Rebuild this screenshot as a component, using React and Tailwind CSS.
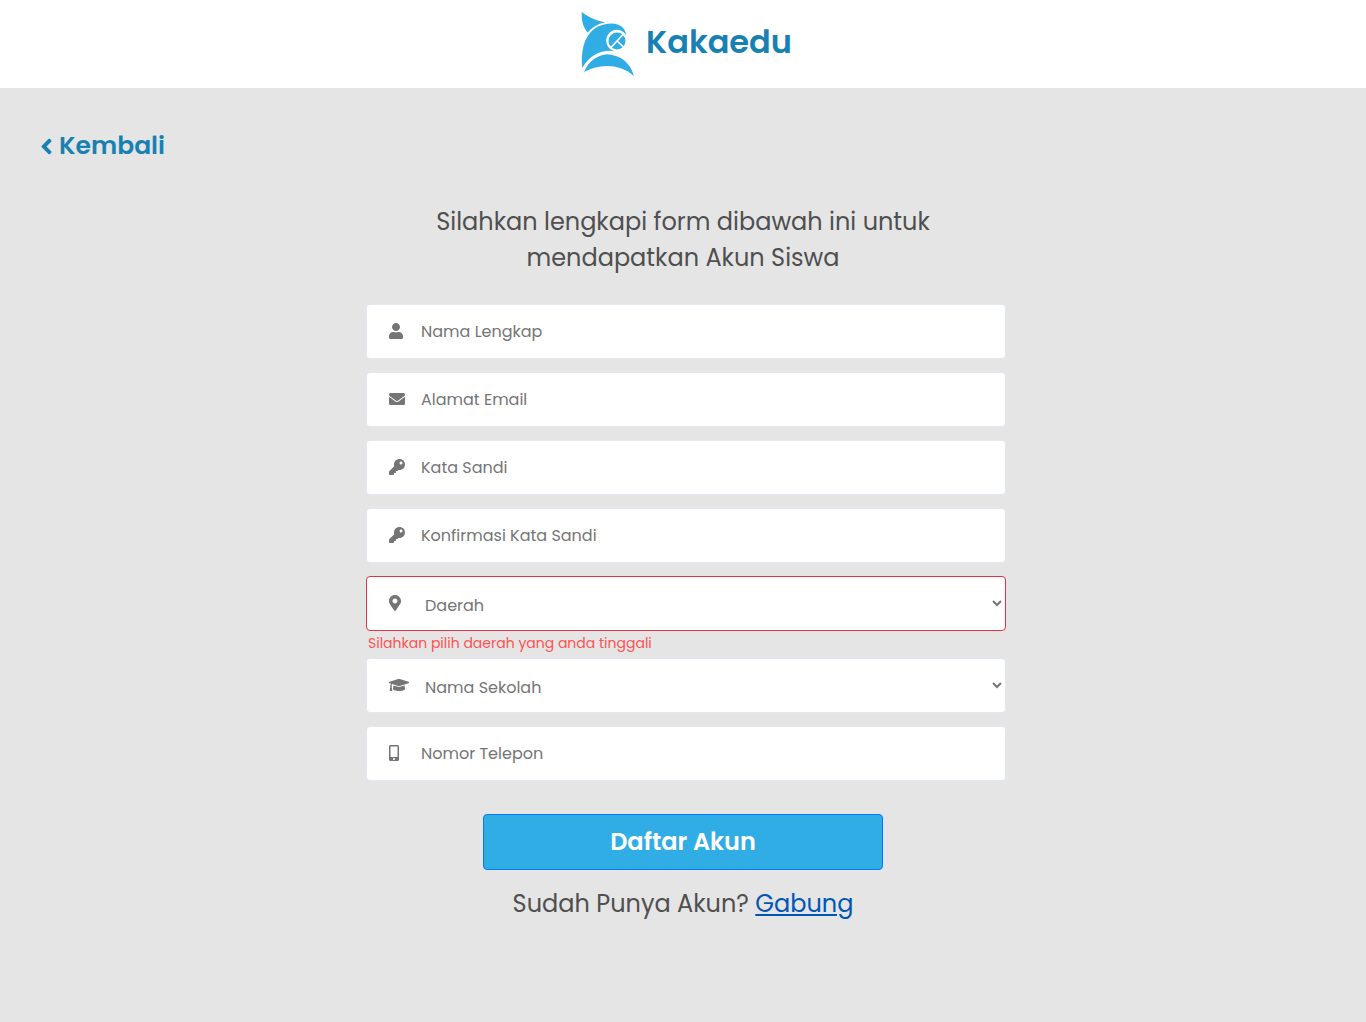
import {
  FaAngleLeft,
  FaEnvelope,
  FaGraduationCap,
  FaKey,
  FaMapMarkerAlt,
  FaMobileAlt,
  FaUser,
} from "react-icons/fa";

function Logo() {
  return (
    <svg className="h-16 w-[54px]" viewBox="0 0 54 64" aria-hidden="true">
      <g fill="#31ade5">
        <path d="M.8 0C8 5.500 15 8.500 24 10.300C17 12 11 15.500 6.500 20.500C2 15 .2 8 .8 0Z" />
        <path d="M1.200 56C-.8 35 5 12 31 11.500C39 11.800 44.500 16 45.300 23.500A10.700 10.700 0 1 0 35 39.200C22 37 9 42 1.200 56Z" />
        <path d="M3 60C8 48 17 43.200 26 42.200C40 43 49.500 51 53 64C40 52 19 51 3 60Z" />
        <circle cx="36" cy="29" r="8.500" />
      </g>
      <path
        d="M42.500 22L29.500 36M36 29L42.500 35"
        fill="none"
        stroke="#fff"
        strokeWidth="1.600"
      />
    </svg>
  );
}

const fieldBase =
  "h-[55px] w-full rounded border bg-white text-base text-[#757575] placeholder:text-[#757575]";

function FieldIcon({ htmlFor, icon: Glyph, width }) {
  return (
    <label htmlFor={htmlFor} className="absolute top-[19px] left-[23px] text-[#757575]">
      <Glyph className={`h-4 ${width}`} aria-hidden="true" />
    </label>
  );
}

function TextField({ id, label, type = "text", icon, iconWidth }) {
  return (
    <div className="relative mb-[13px]">
      <input
        id={id}
        type={type}
        placeholder={label}
        aria-label={label}
        className={`${fieldBase} border-[#e2e8f0] pr-3 pl-[54px]`}
      />
      <FieldIcon htmlFor={id} icon={icon} width={iconWidth} />
    </div>
  );
}

function SelectField({ id, label, icon, iconWidth, error }) {
  return (
    <div className={error ? "mb-1" : "mb-[13px]"}>
      <div className="relative">
        <select
          id={id}
          aria-label={label}
          aria-invalid={Boolean(error)}
          aria-describedby={error ? `${id}-error` : undefined}
          className={`${fieldBase} block pt-1 pr-px pl-[54px] ${error ? "border-[#dc3545]" : "border-[#e2e8f0]"}`}
        >
          <option>{label}</option>
        </select>
        <FieldIcon htmlFor={id} icon={icon} width={iconWidth} />
      </div>
      {error && (
        <p id={`${id}-error`} className="pt-0.5 pl-0.5 text-sm leading-[21px] text-[#ff5252]">{error}</p>
      )}
    </div>
  );
}

export default function App() {
  return (
    <div className="min-h-screen bg-[#e5e5e5] font-['Poppins','Inter',sans-serif] text-[#4f4f4f]">
      <header className="flex h-[88px] items-center justify-center gap-[11px] bg-white pl-[7px]">
        <Logo />
        <span className="pb-1 text-[32px] leading-[48px] font-semibold text-[#1881b3]">Kakaedu</span>
      </header>

      <main className="px-10 pt-10 pb-24">
        <a href="#kembali" className="flex w-fit items-center text-[25px] leading-9 font-semibold text-[#1881b3]">
          <FaAngleLeft size={25} aria-hidden="true" className="-ml-1.5" />
          Kembali
        </a>

        <h1 className="mx-auto mt-10 max-w-[540px] text-center text-2xl leading-9">
          Silahkan lengkapi form dibawah ini untuk mendapatkan Akun Siswa
        </h1>

        <form className="mt-7">
          <div className="mx-auto w-full max-w-[646px] pl-1.5">
            <TextField id="nama" label="Nama Lengkap" icon={FaUser} iconWidth="w-[14px]" />
            <TextField id="email" label="Alamat Email" type="email" icon={FaEnvelope} iconWidth="w-4" />
            <TextField id="sandi" label="Kata Sandi" type="password" icon={FaKey} iconWidth="w-4" />
            <TextField id="konfirmasi" label="Konfirmasi Kata Sandi" type="password" icon={FaKey} iconWidth="w-4" />
            <SelectField
              id="daerah"
              label="Daerah"
              icon={FaMapMarkerAlt}
              iconWidth="w-3"
              error="Silahkan pilih daerah yang anda tinggali"
            />
            <SelectField id="sekolah" label="Nama Sekolah" icon={FaGraduationCap} iconWidth="w-5" />
            <TextField id="telepon" label="Nomor Telepon" type="tel" icon={FaMobileAlt} iconWidth="w-[10px]" />
          </div>
          <button
            type="submit"
            className="mx-auto mt-[33px] block h-14 w-full max-w-[400px] rounded border border-[#007bff] bg-[#31ade5] text-2xl font-semibold text-white"
          >
            Daftar Akun
          </button>
        </form>

        <p className="mt-4 text-center text-2xl leading-9">
          Sudah Punya Akun?{" "}
          <a href="#gabung" className="text-[#0056b3] underline">Gabung</a>
        </p>
      </main>
    </div>
  );
}
